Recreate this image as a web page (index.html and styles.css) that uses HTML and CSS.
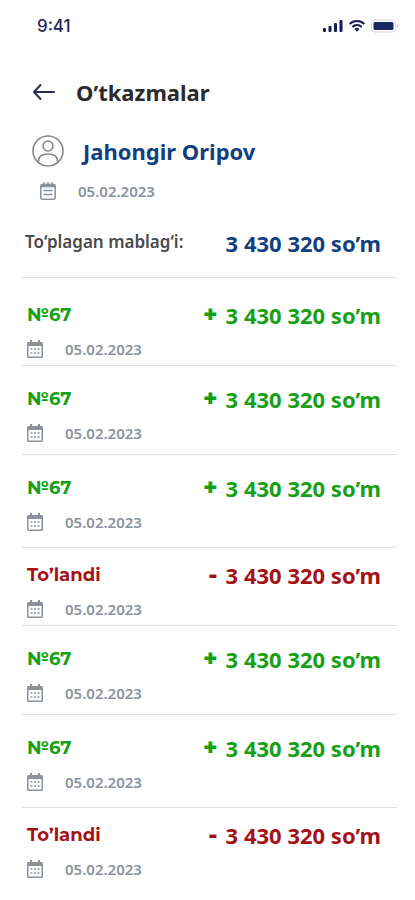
FILE: index.html
```html
<!DOCTYPE html>
<html lang="uz">
<head>
<meta charset="utf-8">
<meta name="viewport" content="width=device-width, initial-scale=1">
<title>O’tkazmalar</title>
<link rel="stylesheet" href="styles.css">
</head>
<body>
<svg class="defs" width="0" height="0" aria-hidden="true">
  <symbol id="calendar" viewBox="0 0 16 18">
    <path fill="currentColor" fill-rule="evenodd" d="M3 0h2v2h6V0h2v2h1.500a1.500 1.500 0 0 1 1.500 1.500v13a1.500 1.500 0 0 1-1.500 1.500h-13A1.500 1.500 0 0 1 0 16.500v-13A1.500 1.500 0 0 1 1.500 2H3zM1.500 6v10.500h13V6z"/>
    <path fill="currentColor" opacity=".75" d="M3.500 8h2v2h-2zM7 8h2v2H7zM10.500 8h2v2h-2zM3.500 12h2v2h-2zM7 12h2v2H7zM10.500 12h2v2h-2z"/>
  </symbol>
</svg>
<div class="status">
  <span class="time">9:41</span>
  <div class="status-icons">
    <svg width="20" height="14" viewBox="0 0 20 14" fill="#1b1c57" aria-hidden="true"><rect y="9" width="3" height="4" rx="1"/><rect x="5.500" y="7" width="3" height="6" rx="1"/><rect x="11" y="4" width="3" height="9" rx="1"/><rect x="16.500" y="1" width="3" height="12" rx="1"/></svg>
    <svg width="16" height="14" viewBox="0 0 16 14" fill="none" stroke="#1b1c57" stroke-width="2" aria-hidden="true"><path d="M.7 5a10.500 10.500 0 0 1 14.600 0M3.300 8a6.800 6.800 0 0 1 9.400 0"/><path d="M5.500 10a3.700 3.700 0 0 1 5 0L8 12.700z" fill="#1b1c57" stroke="none"/></svg>
    <svg width="28" height="14" viewBox="0 0 28 14" aria-hidden="true"><rect x=".5" y="1" width="24" height="12" rx="3.500" fill="none" stroke="#d5d6e6"/><rect x="2.500" y="3" width="20" height="8" rx="1.500" fill="#1b2763"/><path d="M26 5v4q1.500-.6 1.500-2T26 5" fill="#c4c5db"/></svg>
  </div>
</div>
<header class="header">
  <button class="back" type="button" aria-label="Orqaga"><svg width="24" height="20" viewBox="0 0 24 20" fill="none" stroke="#2b2c4e" stroke-width="2" stroke-linecap="round" stroke-linejoin="round"><path d="M22 10H2M8.500 3L2 10l6.500 7"/></svg></button>
  <h1>O’tkazmalar</h1>
</header>
<main>
  <section class="profile">
    <div class="person">
      <svg width="32" height="32" viewBox="0 0 32 32" fill="none" stroke="#87898f" stroke-width="1.600" aria-hidden="true"><circle cx="16" cy="16" r="15"/><circle cx="16" cy="11" r="5"/><path d="M6.500 27.500v-1.500C6.500 21.500 10 19 16 19s9.500 2.500 9.500 7v1.500"/></svg>
      <h2>Jahongir Oripov</h2>
    </div>
    <div class="date joined">
      <svg width="16" height="18" viewBox="0 0 16 18" fill="none" stroke="currentColor" stroke-width="1.500" aria-hidden="true"><rect x=".8" y="2.500" width="14.400" height="14.700" rx="1.500"/><path d="M1 3.800h14" stroke-width="3"/><path d="M4 0v5M8 0v5M12 0v5M3.500 8.500h9M3.500 12.500h9" stroke-width="1.300"/></svg>
      <time datetime="2023-02-05">05.02.2023</time>
    </div>
  </section>
  <div class="total"><span class="total-label">To‘plagan mablag‘i:</span><span class="amount">3 430 320 so’m</span></div>
  <ul class="list">
    <li class="row first"><div class="line"><strong>№67</strong><span class="amount"><b>+</b>3 430 320 so’m</span></div><div class="date"><svg width="16" height="18" aria-hidden="true"><use href="#calendar"/></svg><time datetime="2023-02-05">05.02.2023</time></div></li>
    <li class="row"><div class="line"><strong>№67</strong><span class="amount"><b>+</b>3 430 320 so’m</span></div><div class="date"><svg width="16" height="18" aria-hidden="true"><use href="#calendar"/></svg><time datetime="2023-02-05">05.02.2023</time></div></li>
    <li class="row loose"><div class="line"><strong>№67</strong><span class="amount"><b>+</b>3 430 320 so’m</span></div><div class="date"><svg width="16" height="18" aria-hidden="true"><use href="#calendar"/></svg><time datetime="2023-02-05">05.02.2023</time></div></li>
    <li class="row paid"><div class="line"><strong>To’landi</strong><span class="amount"><b>-</b>3 430 320 so’m</span></div><div class="date"><svg width="16" height="18" aria-hidden="true"><use href="#calendar"/></svg><time datetime="2023-02-05">05.02.2023</time></div></li>
    <li class="row"><div class="line"><strong>№67</strong><span class="amount"><b>+</b>3 430 320 so’m</span></div><div class="date"><svg width="16" height="18" aria-hidden="true"><use href="#calendar"/></svg><time datetime="2023-02-05">05.02.2023</time></div></li>
    <li class="row loose"><div class="line"><strong>№67</strong><span class="amount"><b>+</b>3 430 320 so’m</span></div><div class="date"><svg width="16" height="18" aria-hidden="true"><use href="#calendar"/></svg><time datetime="2023-02-05">05.02.2023</time></div></li>
    <li class="row paid"><div class="line"><strong>To’landi</strong><span class="amount"><b>-</b>3 430 320 so’m</span></div><div class="date"><svg width="16" height="18" aria-hidden="true"><use href="#calendar"/></svg><time datetime="2023-02-05">05.02.2023</time></div></li>
  </ul>
</main>
</body>
</html>
```
FILE: styles.css
```css
* { box-sizing: border-box; }
body {
  margin: 0;
  background: #fefefe;
  color: #2b2b2d;
  font-family: "Noto Sans", "Open Sans", sans-serif;
  font-weight: 600;
}
h1, h2, ul { margin: 0; padding: 0; }
.defs { display: block; }
svg { flex: none; }
.status {
  display: flex;
  align-items: center;
  justify-content: space-between;
  height: 52px;
  padding: 0 16px 0 37px;
  color: #24245c;
}
.time {
  font: 500 17px/20px Inter, sans-serif;
}
.status-icons { display: flex; gap: 6px; }
.header {
  display: flex;
  align-items: center;
  gap: 20px;
  height: 80px;
  padding: 0 32px;
}
.back {
  display: flex;
  padding: 0;
  border: 0;
  background: none;
}
h1, h2, .amount { font-size: 22px; line-height: 28px; font-weight: 700; }
.profile { padding: 3px 32px 0; }
.person {
  display: flex;
  align-items: center;
  gap: 19px;
  height: 32px;
  color: #113f80;
}
.date {
  display: flex;
  align-items: center;
  gap: 22px;
  margin-top: 10px;
  color: #8b929e;
  font-size: 15px;
  line-height: 20px;
}
.joined { margin-top: 14px; padding-left: 8px; }
.total {
  display: flex;
  align-items: center;
  justify-content: space-between;
  height: 68px;
  margin-top: 8px;
  padding: 0 34px 0 25px;
  color: #113f80;
}
.total-label {
  padding-bottom: 4px;
  color: #4a4a4d;
  font-size: 17px;
}
.amount { white-space: nowrap; }
.list {
  margin: 0 18px 0 21px;
  list-style: none;
}
.row {
  padding: 19px 16px 11px 6px;
  border-top: 1px solid #dedfe1;
  color: #16a016;
}
.first { padding-top: 23px; padding-bottom: 6px; }
.loose { padding-bottom: 15px; }
.paid { padding-top: 13px; padding-bottom: 6px; color: #a51216; }
.line {
  display: flex;
  align-items: center;
  justify-content: space-between;
}
.line .amount {
  display: flex;
  align-items: center;
  gap: 8px;
}
.line strong {
  font: 700 18px/28px Montserrat, Inter, sans-serif;
}
.line b {
  font: 800 24px/28px Montserrat, Inter, sans-serif;
}
```
